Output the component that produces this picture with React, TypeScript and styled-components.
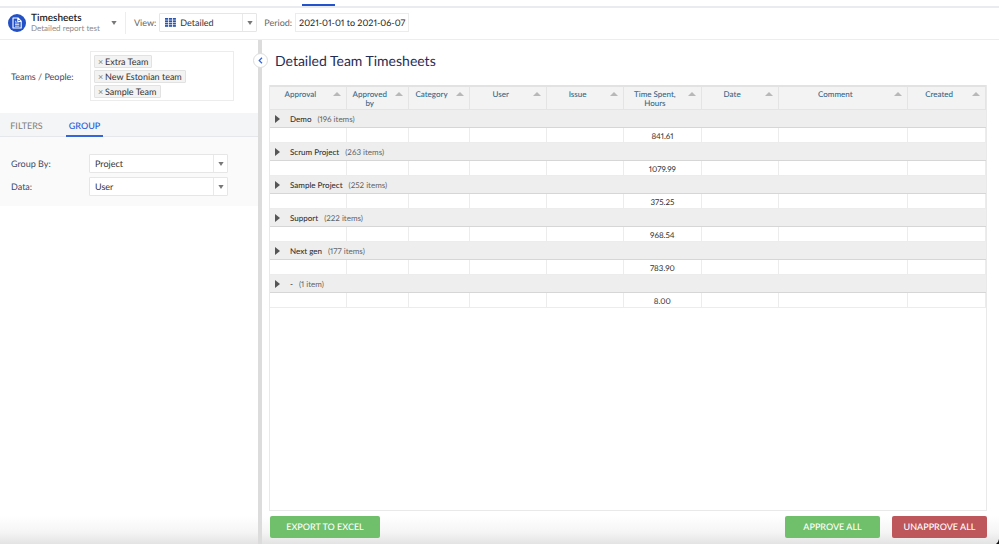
import React from "react";
import styled, { createGlobalStyle } from "styled-components";

const GlobalStyle = createGlobalStyle`
  *, *::before, *::after { box-sizing: border-box; }
  html, body { margin: 0; padding: 0; background: #fff; }
  body, button, input, select, table {
    font-family: Lato, "Open Sans", sans-serif;
    font-variant-numeric: proportional-nums;
    text-rendering: geometricPrecision;
  }
  h1, h2, p { margin: 0; font-weight: 400; }
`;

const Page = styled.div`
  position: relative;
  display: flex;
  flex-direction: column;
  min-height: 100vh;
  color: #333;
  font-size: 9px;
`;

const WindowCorner = styled.svg`
  position: absolute;
  right: 0;
  bottom: 0;
`;

const TopNav = styled.nav`
  display: flex;
  align-items: flex-end;
  height: 8px;
  padding-left: 302px;
  border-bottom: 2px solid #e9ebef;
`;

const ActiveMark = styled.span`
  width: 33px;
  height: 2px;
  background: #2253cc;
`;

const Toolbar = styled.header`
  display: flex;
  align-items: center;
  height: 32px;
  padding: 0 8px 2px;
  border-bottom: 1px solid #ededed;
`;

const ReportButton = styled.button`
  display: flex;
  align-items: center;
  height: 22px;
  padding: 0 8px 0 0;
  border: 0;
  border-right: 1px solid #ededed;
  background: none;
  text-align: left;
`;

const ReportText = styled.span`
  display: flex;
  flex-direction: column;
  width: 80px;
  margin-left: 5px;
`;

const ReportTitle = styled.span`
  color: #222;
  font-size: 10px;
  font-weight: 600;
  line-height: 11px;
  white-space: nowrap;
`;

const ReportSubtitle = styled.span`
  color: #8c8c8c;
  font-size: 8px;
  line-height: 9px;
  white-space: nowrap;
`;

const ToolLabel = styled.label<{ $gap: number }>`
  margin-left: ${(p) => p.$gap}px;
  margin-right: 3px;
  color: #666;
  font-size: 9px;
`;

const SelectFrame = styled.div<{ $width: number }>`
  position: relative;
  display: flex;
  align-items: center;
  width: ${(p) => p.$width}px;
  height: 19px;
  border: 1px solid #e6e6e6;
  border-radius: 1px;
  background: #fff;
`;

const Select = styled.select<{ $indent: number }>`
  flex: 1;
  min-width: 0;
  height: 100%;
  padding: 0 14px 0 ${(p) => p.$indent}px;
  appearance: none;
  border: 0;
  background: transparent;
  color: #333;
  font-size: 9px;
`;

const SelectArrow = styled.span`
  position: absolute;
  top: 0;
  right: 0;
  bottom: 0;
  display: flex;
  align-items: center;
  justify-content: center;
  width: 14px;
  border-left: 1px solid #e9e9e9;
  pointer-events: none;
`;

const SelectIcon = styled.span`
  position: absolute;
  left: 5px;
  display: flex;
  pointer-events: none;
`;

const PeriodInput = styled.input`
  width: 114px;
  height: 19px;
  padding: 0 0 0 3px;
  border: 1px solid #ececec;
  background: #fff;
  color: #222;
  font-size: 9px;
`;

const Body = styled.div`
  display: flex;
  flex: 1;
  background: linear-gradient(to top, #e3e3e3 0, #f5f5f5 12px, #fff 28px);
`;

const Sidebar = styled.aside`
  flex: 0 0 258px;
`;

const People = styled.div`
  display: flex;
  align-items: center;
  padding: 11px 24px 12px 11px;
`;

const FieldLabel = styled.label<{ $width: number }>`
  flex: 0 0 ${(p) => p.$width}px;
  color: #3d4966;
  font-size: 9px;
`;

const TagBox = styled.div`
  display: flex;
  flex: 1;
  flex-direction: column;
  align-items: flex-start;
  gap: 2px;
  height: 50px;
  padding: 3px;
  border: 1px solid #ececec;
`;

const Tag = styled.span`
  display: flex;
  align-items: center;
  height: 13px;
  padding: 0 3px;
  border: 1px solid #e2e2e2;
  border-radius: 1px;
  background: #f3f3f3;
  white-space: nowrap;
`;

const RemoveTag = styled.button`
  width: 7px;
  padding: 0;
  border: 0;
  background: none;
  color: #888;
  font-size: 9px;
  line-height: 11px;
  text-align: left;
`;

const Tabs = styled.div`
  display: flex;
  gap: 13px;
  height: 24px;
  border-bottom: 1px solid #e5e7ea;
  background: #f4f5f7;
`;

const Tab = styled.button<{ $active?: boolean }>`
  width: ${(p) => (p.$active ? 37 : 53)}px;
  margin-bottom: -1px;
  padding: ${(p) => (p.$active ? "2px 0 0" : "0")};
  border: 0;
  border-bottom: ${(p) => (p.$active ? "2px solid #3565d8" : "0")};
  background: none;
  color: ${(p) => (p.$active ? "#3565d8" : "#7d7d7d")};
  font-size: 9px;
  font-weight: ${(p) => (p.$active ? 600 : 400)};
`;

const Grouping = styled.div`
  display: flex;
  flex-direction: column;
  gap: 4px;
  padding: 17px 11px 10px;
  background: #fafafa;
`;

const FieldRow = styled.div`
  display: flex;
  align-items: center;
`;

const Splitter = styled.div`
  position: relative;
  flex: 0 0 4px;
  background: #dcdcdc;
`;

const Collapse = styled.button`
  position: absolute;
  top: 13px;
  left: -5px;
  display: flex;
  align-items: center;
  justify-content: center;
  width: 15px;
  height: 15px;
  padding: 0;
  border: 1px solid #dcdcdc;
  border-radius: 50%;
  background: #fff;
`;

const Main = styled.main`
  display: flex;
  flex: 1;
  flex-direction: column;
  min-width: 0;
  padding: 0 12px 6px 7px;
`;

const Heading = styled.h1`
  padding: 11px 6px 15px;
  color: #1f2d57;
  font-size: 14px;
  line-height: 19px;
`;

const GridFrame = styled.div`
  flex: 1;
  border: 1px solid #e9e9e9;
  border-top: 0;
  background: #fff;
`;

const Table = styled.table`
  width: 100%;
  table-layout: fixed;
  border-collapse: separate;
  border-spacing: 0;
  font-size: 8px;
`;

const HeadCell = styled.th`
  height: 25px;
  padding: 3px 5px 0 2px;
  border-top: 2px solid #e2e2e2;
  border-right: 1px solid #e4e4e4;
  border-bottom: 1px solid #e4e4e4;
  background: #f3f3f3;
  color: #34688a;
  font-weight: 500;
  line-height: 9px;
  vertical-align: top;
`;

const SortButton = styled.button`
  display: flex;
  align-items: flex-start;
  width: 100%;
  padding: 0;
  border: 0;
  background: none;
  color: inherit;
  font-size: 8px;
  font-weight: 500;
  line-height: 9px;
`;

const SortText = styled.span`
  flex: 1;
  min-width: 0;
  text-align: center;
`;

const SortIcon = styled.svg`
  flex: none;
  width: 8px;
  height: 4px;
  margin: 2px 0 0 4px;
  fill: #b8b8b8;
`;

const GroupCell = styled.td`
  height: 18px;
  padding: 0 5px;
  border-bottom: 1px solid #d6d6d6;
  background: #eee;
`;

const GroupLine = styled.div`
  display: flex;
  align-items: center;
  height: 17px;
  color: #333;
  font-weight: 500;
`;

const Toggle = styled.button`
  display: flex;
  width: 15px;
  padding: 0;
  border: 0;
  background: none;
`;

const Count = styled.span`
  margin-left: 6px;
  color: #666;
  font-weight: 400;
`;

const Cell = styled.td`
  height: 15px;
  padding: 1px 0 0;
  border-right: 1px solid #ececec;
  border-bottom: 1px solid #ececec;
  background: #fff;
  color: #333;
  line-height: 10px;
  text-align: center;
`;

const Actions = styled.footer`
  display: flex;
  gap: 12px;
  margin-top: 5px;
  padding-left: 1px;
`;

const ActionButton = styled.button<{ $tone: string; $wide?: boolean; $push?: boolean }>`
  width: ${(p) => (p.$wide ? 110 : 95)}px;
  height: 22px;
  margin-right: ${(p) => (p.$push ? "auto" : "0")};
  padding: 0 0 1px;
  border: 0;
  border-radius: 2px;
  background: ${(p) => p.$tone};
  color: #fff;
  font-size: 9px;
  font-weight: 500;
`;

const DownArrow = () => (
  <svg width="6" height="4" viewBox="0 0 6 4" fill="#777" aria-hidden="true">
    <path d="M.4 0h5.2L3 4z" />
  </svg>
);

const ReportIcon = () => (
  <svg width="18" height="18" viewBox="0 0 18 18" fill="none" aria-hidden="true">
    <circle cx="9" cy="9" r="9" fill="#2350c4" />
    <path d="M5 4h5l3.2 3.2V14H5z M9.8 4v3.5h3.4" stroke="#fff" strokeWidth="1.1" strokeLinejoin="round" />
    <path d="M7 9h4.3M7 10.6h4.3M7 12.2h4.3M7 7.3h1.3" stroke="#fff" strokeWidth=".8" />
  </svg>
);

const GridIcon = () => (
  <svg width="11" height="9" viewBox="0 0 11 9" fill="#2a55ac" aria-hidden="true">
    {[0, 2.35, 4.7, 7.05].map((y) =>
      [0, 3.9, 7.8].map((x) => <rect key={`${x}-${y}`} x={x} y={y} width="3.1" height="1.75" />)
    )}
  </svg>
);

const columns = [
  { name: "Approval", width: 77 },
  { name: "Approved by", width: 62 },
  { name: "Category", width: 62 },
  { name: "User", width: 77 },
  { name: "Issue", width: 77 },
  { name: "Time Spent, Hours", width: 78 },
  { name: "Date", width: 77 },
  { name: "Comment", width: 130 },
  { name: "Created", width: 78 },
];

const totalWidth = columns.reduce((sum, c) => sum + c.width, 0);

const Col = styled.col<{ $share: number }>`
  width: ${(p) => p.$share}%;
`;

const groups = [
  { name: "Demo", count: "(196 items)", hours: "841.61" },
  { name: "Scrum Project", count: "(263 items)", hours: "1079.99" },
  { name: "Sample Project", count: "(252 items)", hours: "375.25" },
  { name: "Support", count: "(222 items)", hours: "968.54" },
  { name: "Next gen", count: "(177 items)", hours: "783.90" },
  { name: "-", count: "(1 item)", hours: "8.00" },
];

const teams = ["Extra Team", "New Estonian team", "Sample Team"];

function Dropdown(props: { id: string; value: string; width: number; indent: number; icon?: React.ReactNode }) {
  return (
    <SelectFrame $width={props.width}>
      {props.icon && <SelectIcon>{props.icon}</SelectIcon>}
      <Select id={props.id} $indent={props.indent} defaultValue={props.value}>
        <option>{props.value}</option>
      </Select>
      <SelectArrow>
        <DownArrow />
      </SelectArrow>
    </SelectFrame>
  );
}

export default function App() {
  return (
    <>
      <GlobalStyle />
      <Page>
        <TopNav>
          <ActiveMark />
        </TopNav>
        <Toolbar>
          <ReportButton>
            <ReportIcon />
            <ReportText>
              <ReportTitle>Timesheets</ReportTitle>
              <ReportSubtitle>Detailed report test</ReportSubtitle>
            </ReportText>
            <DownArrow />
          </ReportButton>
          <ToolLabel $gap={8} htmlFor="view">View:</ToolLabel>
          <Dropdown id="view" value="Detailed" width={98} indent={20} icon={<GridIcon />} />
          <ToolLabel $gap={7} htmlFor="period">Period:</ToolLabel>
          <PeriodInput id="period" defaultValue="2021-01-01 to 2021-06-07" />
        </Toolbar>
        <Body>
          <Sidebar>
            <People>
              <FieldLabel as="span" $width={79}>Teams / People:</FieldLabel>
              <TagBox>
                {teams.map((team) => (
                  <Tag key={team}>
                    <RemoveTag aria-label={`Remove ${team}`}>×</RemoveTag>
                    {team}
                  </Tag>
                ))}
              </TagBox>
            </People>
            <Tabs role="tablist">
              <Tab role="tab" aria-selected="false">FILTERS</Tab>
              <Tab role="tab" aria-selected="true" $active>GROUP</Tab>
            </Tabs>
            <Grouping>
              <FieldRow>
                <FieldLabel $width={78} htmlFor="group-by">Group By:</FieldLabel>
                <Dropdown id="group-by" value="Project" width={139} indent={5} />
              </FieldRow>
              <FieldRow>
                <FieldLabel $width={78} htmlFor="data">Data:</FieldLabel>
                <Dropdown id="data" value="User" width={139} indent={5} />
              </FieldRow>
            </Grouping>
          </Sidebar>
          <Splitter>
            <Collapse aria-label="Collapse panel">
              <svg width="5" height="7" viewBox="0 0 5 7" fill="none" stroke="#2f63e0" strokeWidth="1.2">
                <path d="M4 .8 1.2 3.5 4 6.2" />
              </svg>
            </Collapse>
          </Splitter>
          <Main>
            <Heading>Detailed Team Timesheets</Heading>
            <GridFrame>
              <Table>
                <colgroup>
                  {columns.map((c) => (
                    <Col key={c.name} $share={(c.width / totalWidth) * 100} />
                  ))}
                </colgroup>
                <thead>
                  <tr>
                    {columns.map((c) => (
                      <HeadCell key={c.name} scope="col">
                        <SortButton>
                          <SortText>{c.name}</SortText>
                          <SortIcon viewBox="0 0 8 4" aria-hidden="true">
                            <path d="M0 4 4 0l4 4z" />
                          </SortIcon>
                        </SortButton>
                      </HeadCell>
                    ))}
                  </tr>
                </thead>
                <tbody>
                  {groups.map((g) => (
                    <React.Fragment key={g.name}>
                      <tr>
                        <GroupCell colSpan={columns.length}>
                          <GroupLine>
                            <Toggle aria-label={`Expand ${g.name}`}>
                              <svg width="5" height="8" viewBox="0 0 5 8" fill="#555">
                                <path d="M0 0 5 4 0 8z" />
                              </svg>
                            </Toggle>
                            {g.name}
                            <Count>{g.count}</Count>
                          </GroupLine>
                        </GroupCell>
                      </tr>
                      <tr>
                        {columns.map((c, i) => (
                          <Cell key={c.name}>{i === 5 ? g.hours : null}</Cell>
                        ))}
                      </tr>
                    </React.Fragment>
                  ))}
                </tbody>
              </Table>
            </GridFrame>
            <Actions>
              <ActionButton $tone="#70bf6b" $wide $push>EXPORT TO EXCEL</ActionButton>
              <ActionButton $tone="#70bf6b">APPROVE ALL</ActionButton>
              <ActionButton $tone="#bd575b">UNAPPROVE ALL</ActionButton>
            </Actions>
          </Main>
        </Body>
        <WindowCorner width="3" height="5" viewBox="0 0 3 5" aria-hidden="true">
          <path d="M3 0Q2.6 3 0 5h3z" fill="#111" />
        </WindowCorner>
      </Page>
    </>
  );
}
